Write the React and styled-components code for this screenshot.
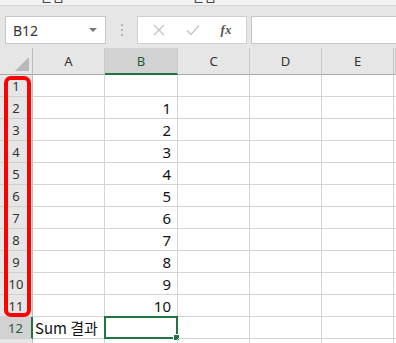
import React from "react";
import styled, { createGlobalStyle } from "styled-components";

const Global = createGlobalStyle`
  html, body { margin: 0; padding: 0; background: #fff; }
  body { font-family: "Noto Sans", "Noto Sans CJK KR", sans-serif; }
`;

const Page = styled.div`
  width: 396px;
  height: 343px;
  overflow: hidden;
  background: #e6e6e6;
  position: relative;
`;

const RibbonEdge = styled.div`
  height: 5px;
  overflow: hidden;
  background: #f3f3f3;
  border-bottom: 1px solid #d5d5d5;
  display: flex;
  font-family: "Noto Sans CJK KR", sans-serif;
  font-size: 13px;
  color: #444;
`;

const RibbonLabel = styled.span`
  margin-top: -12px;
  margin-left: ${(p) => p.left}px;
  line-height: 16px;
`;

const Toolbar = styled.div`
  height: 28px;
  display: flex;
  align-items: stretch;
  padding: 10px 0 0 5px;
`;

const NameBox = styled.div`
  width: 101px;
  box-sizing: border-box;
  background: #fff;
  border: 1px solid #c6c6c6;
  display: flex;
  align-items: center;
  justify-content: space-between;
  padding: 0 8px 0 7px;
  font-size: 14px;
  color: #333;
`;

const Caret = styled.span`
  width: 0;
  height: 0;
  border-left: 4px solid transparent;
  border-right: 4px solid transparent;
  border-top: 4px solid #777;
`;

const Dots = styled.div`
  width: 31px;
  display: flex;
  flex-direction: column;
  align-items: center;
  justify-content: center;
  gap: 3px;
  span {
    width: 2px;
    height: 2px;
    background: #b5b5b5;
  }
`;

const ActionBox = styled.div`
  width: 110px;
  box-sizing: border-box;
  background: #fff;
  border: 1px solid #d0d0d0;
  display: flex;
  align-items: center;
  justify-content: space-around;
  padding: 0 4px;
`;

const Fx = styled.span`
  font-family: "Liberation Serif", serif;
  font-style: italic;
  font-weight: bold;
  font-size: 13px;
  color: #555;
`;

const FormulaBox = styled.div`
  flex: 1;
  margin-left: 4px;
  background: #fff;
  border: 1px solid #c6c6c6;
  border-right: none;
`;

const Sheet = styled.div`
  margin-top: 4px;
  display: grid;
  grid-template-columns: 33px 72px 73px 72px 72px 72px 2px;
  grid-template-rows: 27px;
  grid-auto-rows: 22px;
  background: #fff;
  position: relative;
`;

const Corner = styled.div`
  background: #e6e6e6;
  border-right: 1px solid #bcbcbc;
  border-bottom: 1px solid #ababab;
  box-sizing: border-box;
  position: relative;
  &::after {
    content: "";
    position: absolute;
    right: 3px;
    bottom: 3px;
    border-left: 14px solid transparent;
    border-bottom: 14px solid #b8b8b8;
  }
`;

const ColHead = styled.div`
  box-sizing: border-box;
  background: ${(p) => (p.active ? "#d2d2d2" : "#e6e6e6")};
  border-right: 1px solid #c8c8c8;
  border-bottom: ${(p) => (p.active ? "2px solid #217346" : "1px solid #ababab")};
  display: flex;
  align-items: center;
  justify-content: center;
  font-size: 13px;
  color: ${(p) => (p.active ? "#1d5e3a" : "#333")};
`;

const RowHead = styled.div`
  box-sizing: border-box;
  background: ${(p) => (p.active ? "#d2d2d2" : "#e6e6e6")};
  border-right: ${(p) => (p.active ? "2px solid #217346" : "1px solid #bcbcbc")};
  border-bottom: 1px solid #cfcfcf;
  display: flex;
  align-items: center;
  justify-content: center;
  font-size: 13px;
  color: ${(p) => (p.active ? "#1d5e3a" : "#333")};
`;

const Cell = styled.div`
  box-sizing: border-box;
  border-right: 1px solid #d4d4d4;
  border-bottom: 1px solid #d4d4d4;
  display: flex;
  align-items: center;
  justify-content: ${(p) => (p.num ? "flex-end" : "flex-start")};
  padding: 0 6px 0 2px;
  font-size: 15px;
  color: #111;
  white-space: nowrap;
  font-family: ${(p) => (p.num ? '"Noto Sans", sans-serif' : '"Noto Sans CJK KR", sans-serif')};
  position: relative;
  overflow: visible;
`;

const Selected = styled.div`
  position: absolute;
  inset: -1px -1px -1px -1px;
  border: 2px solid #217346;
  pointer-events: none;
  &::after {
    content: "";
    position: absolute;
    right: -4px;
    bottom: -4px;
    width: 5px;
    height: 5px;
    background: #217346;
    border: 1px solid #fff;
  }
`;

const Highlight = styled.div`
  position: absolute;
  left: 4px;
  top: 28px;
  width: 27px;
  height: 241px;
  box-sizing: border-box;
  border: 4px solid #ff0000;
  border-radius: 7px;
  pointer-events: none;
`;

const cols = ["A", "B", "C", "D", "E"];

export default function App() {
  const rows = [];
  for (let r = 1; r <= 13; r++) {
    rows.push(
      <React.Fragment key={r}>
        <RowHead active={r === 12}>{r <= 12 ? r : null}</RowHead>
        {cols.map((c) => {
          let content = null;
          if (c === "A" && r === 12) content = "Sum 결과";
          if (c === "B" && r >= 2 && r <= 11) content = r - 1;
          return (
            <Cell key={c} num={c === "B"}>
              {content}
              {c === "B" && r === 12 && <Selected />}
            </Cell>
          );
        })}
        <Cell />
      </React.Fragment>
    );
  }

  return (
    <Page>
      <Global />
      <RibbonEdge>
        <RibbonLabel left={40}>편집</RibbonLabel>
        <RibbonLabel left={128}>편집</RibbonLabel>
      </RibbonEdge>
      <Toolbar>
        <NameBox>
          B12
          <Caret />
        </NameBox>
        <Dots>
          <span />
          <span />
          <span />
        </Dots>
        <ActionBox>
          <svg width="12" height="12" viewBox="0 0 12 12">
            <path d="M1 1L11 11M11 1L1 11" stroke="#c4c4c4" strokeWidth="1.3" />
          </svg>
          <svg width="14" height="12" viewBox="0 0 14 12">
            <path d="M1 6.5L5 10.5L13 1.5" stroke="#c4c4c4" strokeWidth="1.4" fill="none" />
          </svg>
          <Fx>fx</Fx>
        </ActionBox>
        <FormulaBox />
      </Toolbar>
      <Sheet>
        <Corner />
        {cols.map((c) => (
          <ColHead key={c} active={c === "B"}>
            {c}
          </ColHead>
        ))}
        <ColHead />
        {rows}
        <Highlight />
      </Sheet>
    </Page>
  );
}
